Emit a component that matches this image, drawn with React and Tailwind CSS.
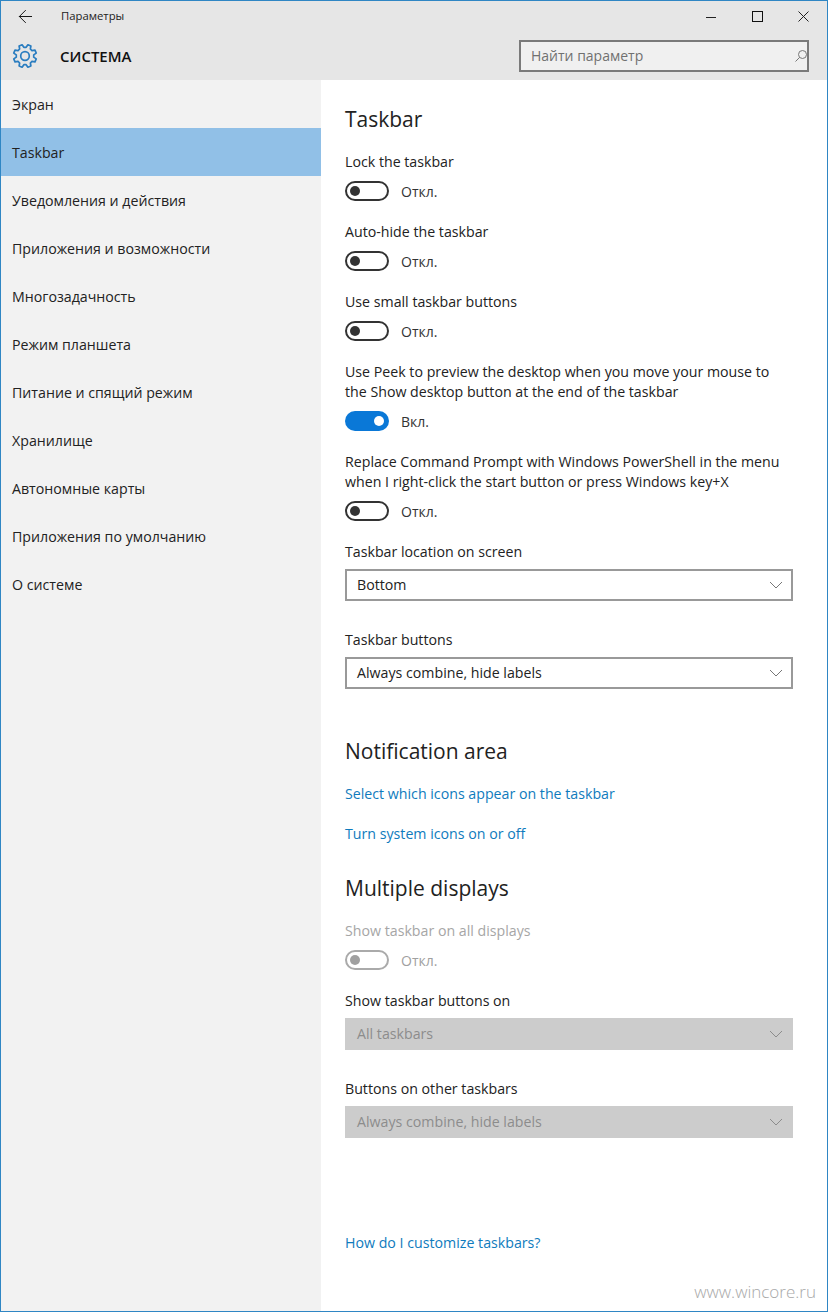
import { ArrowLeft } from "lucide-react";

const font = "font-['Open_Sans','Noto_Sans',sans-serif]";

const menu = [
  "Экран",
  "Taskbar",
  "Уведомления и действия",
  "Приложения и возможности",
  "Многозадачность",
  "Режим планшета",
  "Питание и спящий режим",
  "Хранилище",
  "Автономные карты",
  "Приложения по умолчанию",
  "О системе",
];

// eight-tooth cog outline
function gearPath() {
  const pt = (r, deg) => {
    const a = (deg * Math.PI) / 180;
    return `${(13 + r * Math.cos(a)).toFixed(2)} ${(13 + r * Math.sin(a)).toFixed(2)}`;
  };
  let d = "";
  for (let i = 0; i < 8; i++) {
    const c = i * 45 + 22.5;
    d += `${i === 0 ? "M" : "L"}${pt(8.8, c - 15)} L${pt(11.6, c - 8)} L${pt(11.6, c + 8)} L${pt(8.8, c + 15)} `;
  }
  return d + "Z";
}

function Gear() {
  return (
    <svg width="26" height="26" viewBox="0 0 26 26" fill="none" stroke="#2a7dc0" strokeWidth="1.7" strokeLinejoin="round">
      <circle cx="13" cy="13" r="4.3" />
      <path d={gearPath()} />
    </svg>
  );
}

function Toggle({ on, disabled, label, className = "" }) {
  if (on) {
    return (
      <div className={`flex items-center h-5 ${className}`}>
        <div className="w-11 h-5 rounded-full bg-[#0a78d7] flex items-center justify-end pr-[5px]">
          <div className="w-2.5 h-2.5 rounded-full bg-white" />
        </div>
        <span className="ml-3 text-[14px] text-[#333]">{label}</span>
      </div>
    );
  }
  return (
    <div className={`flex items-center h-5 ${className}`}>
      <div className={`w-11 h-5 rounded-full border-2 flex items-center pl-[3px] ${disabled ? "border-[#aaa]" : "border-[#333]"}`}>
        <div className={`w-2.5 h-2.5 rounded-full ${disabled ? "bg-[#a0a0a0]" : "bg-[#333]"}`} />
      </div>
      <span className={`ml-3 text-[14px] ${disabled ? "text-[#a0a0a0]" : "text-[#333]"}`}>{label}</span>
    </div>
  );
}

function Label({ children, className = "", muted }) {
  return <p className={`text-[14.2px] leading-5 ${muted ? "text-[#a6a6a6]" : "text-[#222]"} ${className}`}>{children}</p>;
}

function Select({ value, disabled, className = "" }) {
  return (
    <div
      className={`h-8 w-[448px] flex items-center justify-between text-[14.2px] ${
        disabled ? "bg-[#cccccc] text-[#8c8c8c] pl-3 pr-2.5" : "border-2 border-[#999] text-[#222] pl-2.5 pr-2"
      } ${className}`}
    >
      <span>{value}</span>
      <svg width="14" height="8" viewBox="0 0 14 8" fill="none" stroke={disabled ? "#8c8c8c" : "#777"} strokeWidth="1">
        <path d="M1 1l6 6 6-6" />
      </svg>
    </div>
  );
}

function Heading({ children, className = "" }) {
  return <h2 className={`text-[21px] leading-7 text-[#222] ${className}`}>{children}</h2>;
}

function Link({ children, className = "" }) {
  return <p className={`text-[14.2px] leading-5 text-[#0f7bbd] ${className}`}>{children}</p>;
}

export default function App() {
  return (
    <div className={`relative w-[828px] h-[1312px] flex flex-col bg-white border border-[#2f86c4] overflow-hidden ${font}`}>
      <header className="bg-[#e6e6e6] h-[79px] shrink-0">
        <div className="h-[31px] flex items-center">
          <ArrowLeft size={21} strokeWidth={1.1} className="ml-[14px] text-[#111]" />
          <span className="ml-[25px] text-[11.3px] text-[#222]">Параметры</span>
          <div className="ml-auto flex items-center">
            <div className="w-2.5 h-px bg-[#222] mt-0.5" />
            <div className="ml-[36px] w-[11px] h-[11px] border border-[#111]" />
            <svg className="ml-[35px] mr-[18px]" width="11" height="11" viewBox="0 0 11 11" fill="none" stroke="#222" strokeWidth="1">
              <path d="M.5.5l10 10M10.5.5l-10 10" />
            </svg>
          </div>
        </div>
        <div className="h-[48px] flex items-center">
          <div className="ml-[11px]"><Gear /></div>
          <span className="ml-[22px] text-[15px] font-semibold text-[#111]">СИСТЕМА</span>
          <div className="ml-auto mr-[18px] w-[290px] h-8 border-2 border-[#7a7a7a] bg-[#f0f0f0] flex items-center justify-between pl-2.5">
            <span className="text-[14px] text-[#707070] pb-0.5">Найти параметр</span>
            <svg width="12" height="12" viewBox="0 0 12 12" fill="none" stroke="#777" strokeWidth="1">
              <circle cx="7.5" cy="4.5" r="4" />
              <path d="M4.6 7.4L.5 11.5" />
            </svg>
          </div>
        </div>
      </header>

      <div className="flex flex-1 min-h-0">
        <nav className="w-[320px] bg-[#f2f2f2] shrink-0">
          {menu.map((item, i) => (
            <div key={item} className={`h-12 flex items-center pl-[11px] pt-0.5 text-[14.2px] text-[#222] ${i === 1 ? "bg-[#91c0e7]" : ""}`}>
              {item}
            </div>
          ))}
        </nav>

        <main className="pl-6 pt-[25px]">
          <Heading>Taskbar</Heading>
          <Label className="mt-[19px]">Lock the taskbar</Label>
          <Toggle className="mt-[9px]" label="Откл." />
          <Label className="mt-[21px]">Auto-hide the taskbar</Label>
          <Toggle className="mt-[9px]" label="Откл." />
          <Label className="mt-[21px]">Use small taskbar buttons</Label>
          <Toggle className="mt-[9px]" label="Откл." />
          <Label className="mt-[21px]">
            Use Peek to preview the desktop when you move your mouse to
            <br />
            the Show desktop button at the end of the taskbar
          </Label>
          <Toggle className="mt-[9px]" on label="Вкл." />
          <Label className="mt-[21px]">
            Replace Command Prompt with Windows PowerShell in the menu
            <br />
            when I right-click the start button or press Windows key+X
          </Label>
          <Toggle className="mt-[9px]" label="Откл." />
          <Label className="mt-[21px]">Taskbar location on screen</Label>
          <Select className="mt-[7px]" value="Bottom" />
          <Label className="mt-[29px]">Taskbar buttons</Label>
          <Select className="mt-[7px]" value="Always combine, hide labels" />

          <Heading className="mt-12">Notification area</Heading>
          <Link className="mt-[19px]">Select which icons appear on the taskbar</Link>
          <Link className="mt-5">Turn system icons on or off</Link>

          <Heading className="mt-[30px]">Multiple displays</Heading>
          <Label muted className="mt-[19px]">Show taskbar on all displays</Label>
          <Toggle className="mt-[9px]" disabled label="Откл." />
          <Label className="mt-[21px]">Show taskbar buttons on</Label>
          <Select className="mt-[7px]" disabled value="All taskbars" />
          <Label className="mt-[29px]">Buttons on other taskbars</Label>
          <Select className="mt-[7px]" disabled value="Always combine, hide labels" />

          <Link className="mt-[95px]">How do I customize taskbars?</Link>
        </main>
      </div>

      <span className="absolute right-[11px] bottom-[7px] text-[17px] font-light text-[#a8a8a8]">www.wincore.ru</span>
    </div>
  );
}
